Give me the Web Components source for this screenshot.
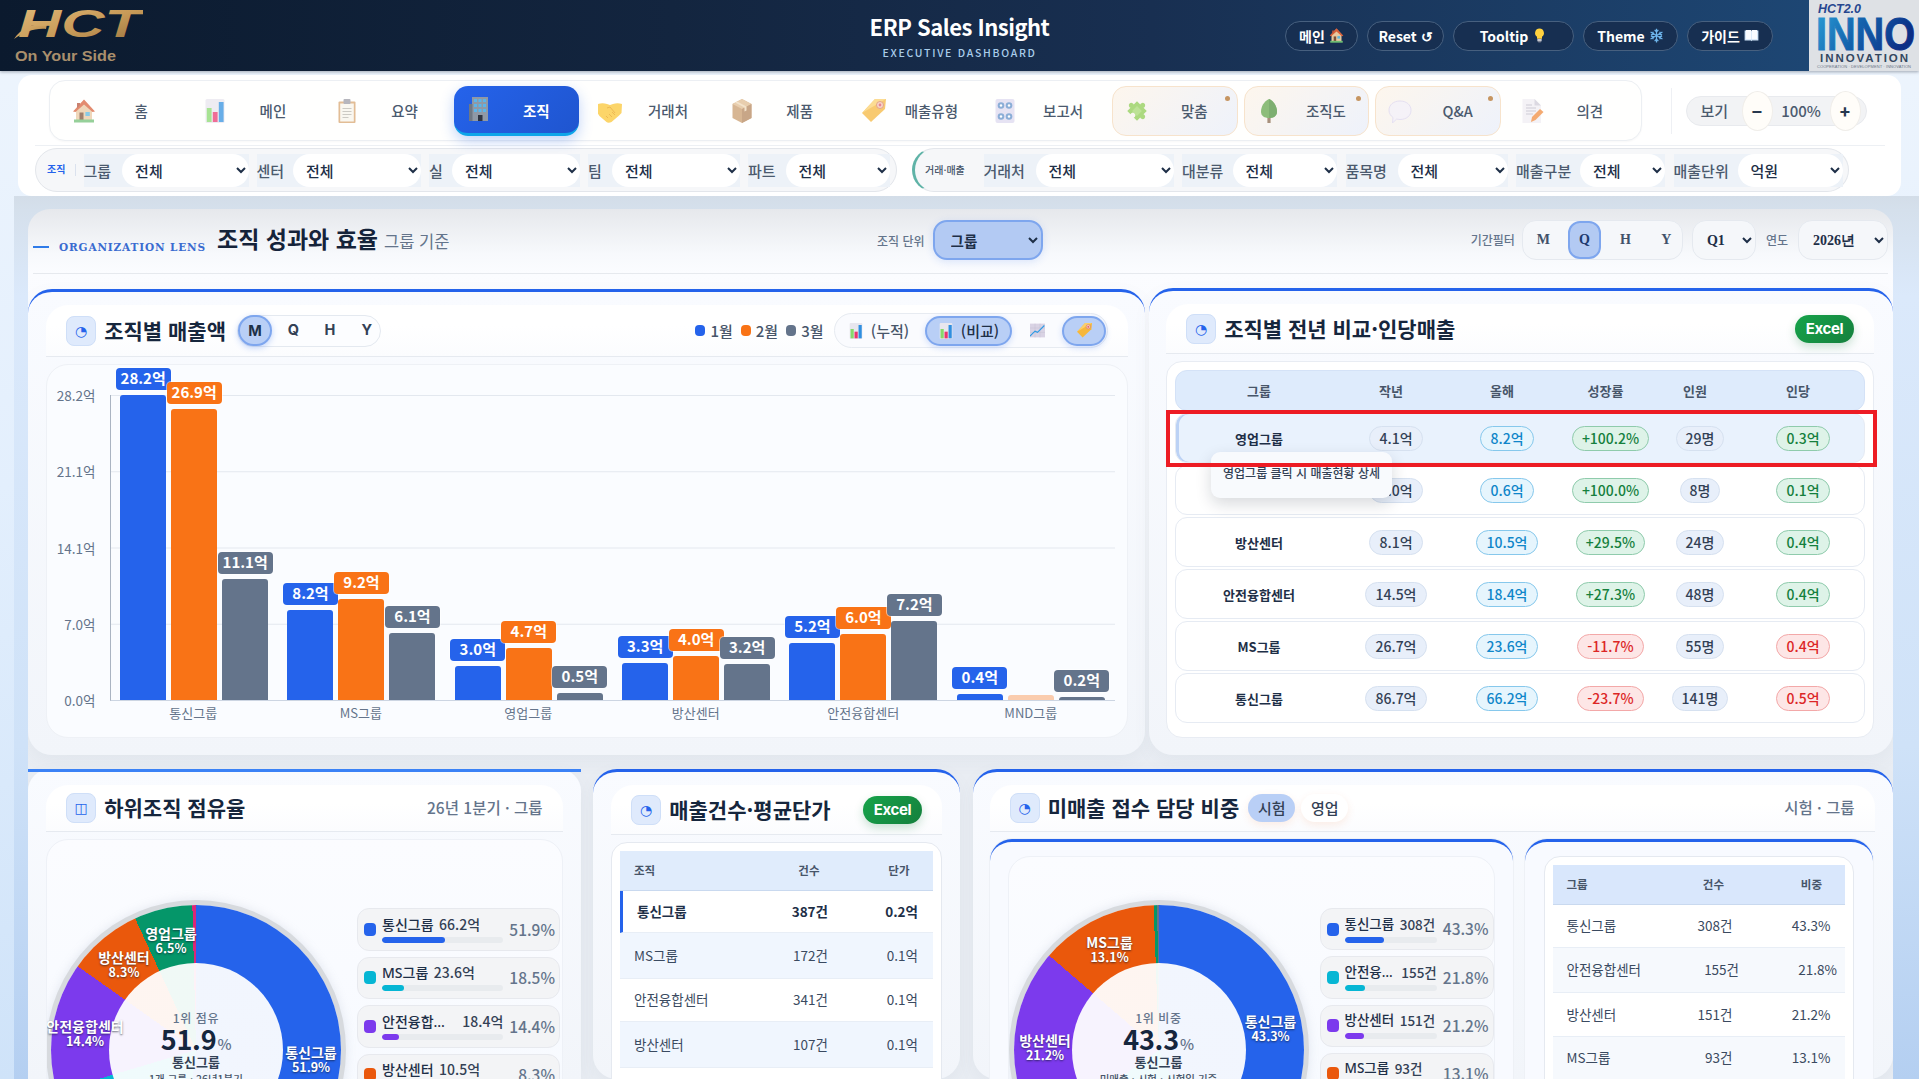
<!DOCTYPE html>
<html lang="ko"><head><meta charset="utf-8"><title>ERP Sales Insight</title>
<style>
html,body{margin:0;padding:0;height:1079px;overflow:hidden}
body{width:1919px;font-family:"Noto Sans CJK KR","Noto Sans",sans-serif;color:#1e293b;
background:linear-gradient(180deg,#eef5fd 0,#e3effd 45%,#cfe3f9 100%)}
</style></head><body>
<app-header></app-header>
<app-nav></app-nav>
<app-main>
  <section-head></section-head>
  <card-row style="--cols:1117.5px 744px;--gap:4px">
    <app-card heading="조직별 매출액" icon="◔" head="52" style="height:466px;--pl:18.5px;--pr:17px;--bodygap:7px">
      <chart-seg slot="lead"></chart-seg>
      <chart-tools slot="actions"></chart-tools>
      <bar-chart></bar-chart>
    </app-card>
    <app-card heading="조직별 전년 비교·인당매출" icon="◔" head="50" style="height:467px;margin-top:-1px;--pl:17px;--pr:19px;--bodygap:7px">
      <excel-btn slot="actions"></excel-btn>
      <cmp-table></cmp-table>
    </app-card>
  </card-row>
  <card-row style="--cols:552.5px 367px 920px;--gap:12.5px;margin-top:14px;padding-left:.5px">
    <app-card heading="하위조직 점유율" icon="◫" head="47" flat style="height:310px;--bodygap:7px">
      <span-note slot="actions" text="26년 1분기 · 그룹"></span-note>
      <donut-panel kind="share" style="--top:65px;--lead:4px;--lw:203px;--lgap:16px;--lf:14px;height:260px"></donut-panel>
    </app-card>
    <app-card heading="매출건수·평균단가" icon="◔" head="50" style="height:310px;--bodygap:7px">
      <excel-btn slot="actions"></excel-btn>
      <mini-table kind="count" style="--rc:90px;--pr2:15px;height:250px"></mini-table>
    </app-card>
    <app-card heading="미매출 접수 담당 비중" icon="◔" head="47" style="height:310px;--pl:17px;--pr:18px;--bodygap:7px">
      <pill-tabs slot="lead"></pill-tabs>
      <span-note slot="actions" text="시험 · 그룹"></span-note>
      <card-row style="--cols:523px 348px;--gap:12px">
        <sub-card style="--px:18px"><donut-panel kind="pending" style="--top:48px;--lead:5px;--lw:174px;--lgap:16px;--lf:13.5px;height:240px"></donut-panel></sub-card>
        <sub-card style="--px:19px"><mini-table kind="staff" style="--rc:98px;--pr2:14px;height:240px"></mini-table></sub-card>
      </card-row>
    </app-card>
  </card-row>
</app-main>
<script>
const def=(name,fn)=>customElements.define(name,class extends HTMLElement{
  connectedCallback(){ if(this.shadowRoot) return; const s=this.attachShadow({mode:'open'}); s.innerHTML=fn(this); }
});
/* ---------- emoji-like icons drawn as SVG ---------- */
const ICONS={
house:'<path d="M12 1 2 12h2v9h16v-9h2z" fill="#e9c9a0"/><path d="M12 .5 1 12.500l2.500.5L12 5.500l8.500 7.500 2.500-.5z" fill="#d9603a"/><path d="M5 4h3v2L5 9.500z" fill="#b5533a"/><rect x="7.500" y="13.500" width="4" height="7.500" fill="#7c4f35"/><rect x="13.400" y="13" width="4.400" height="4" fill="#5cb6dd"/><rect x="2" y="20.500" width="20" height="3" fill="#6fbf73"/>',
chart:'<rect x="2.500" y="0" width="19" height="24" rx="1.500" fill="#e8e6ee"/><rect x="3.800" y="9" width="4.800" height="14" fill="#86d96b"/><rect x="9.800" y="13" width="4.800" height="10" fill="#e9356f"/><rect x="15.800" y="3" width="4.800" height="20" fill="#2f8fe0"/>',
clip:'<rect x="3.500" y="2.500" width="17" height="21.500" rx="1" fill="#d8a46e"/><rect x="5.200" y="4.500" width="13.600" height="18" fill="#f8f4ec"/><rect x="8.500" y="0" width="7" height="5" rx="1" fill="#9a9aa5"/><path d="M7.500 9.500h9M7.500 12.500h9M7.500 15.500h9M7.500 18.500h6" stroke="#b9b6ae" stroke-width="1"/>',
bldg:'<rect x="5" y="0" width="16" height="24" fill="#8f99a6"/><rect x="2" y="7" width="3.500" height="17" fill="#6f7884"/><g fill="#5bb5ea"><rect x="7" y="2" width="3" height="3"/><rect x="11.500" y="2" width="3" height="3"/><rect x="16" y="2" width="3" height="3"/><rect x="7" y="7" width="3" height="3"/><rect x="11.500" y="7" width="3" height="3"/><rect x="16" y="7" width="3" height="3"/><rect x="7" y="12" width="3" height="3"/><rect x="11.500" y="12" width="3" height="3"/><rect x="16" y="12" width="3" height="3"/></g><rect x="11" y="18" width="4.500" height="6" fill="#2f3542"/>',
hand:'<path d="M0 5c3-1 6-1 9 0l3 1 3-1c3-1 6-1 9 0l-.5 9-3 3-7 6c-2 1-4 1-5 0l-7-6-2-3z" fill="#fbc531"/><path d="M9 9l3-1 5 6M8 17l2 2M11 15l3 3M14 13l3 3" stroke="#e79f13" stroke-width="1" fill="none"/>',
box:'<path d="M12 0 2.500 5v14l9.500 5 9.500-5V5z" fill="#c99b6b"/><path d="M12 0 2.500 5l9.500 5 9.500-5z" fill="#e0bc90"/><path d="M12 10v14l9.500-5V5z" fill="#b4845a"/><path d="M7 2.500l9.500 5v4l-2 1v-4L5 3.500z" fill="#efd9b8"/>',
tag:'<path d="M24 0 13 0 0 14l9 9 14-13z" fill="#f6b73c"/><path d="M24 0 13 0 0 14z" fill="#fbcf6a"/><circle cx="18" cy="6" r="3.500" fill="#f4c9b6" stroke="#d9805f"/><circle cx="18" cy="6" r="1.400" fill="#e2556a"/>',
knob:'<rect x="2.500" y="0" width="19" height="24" rx="2" fill="#ddd9ef"/><g fill="#5f8fc9"><circle cx="8" cy="6.500" r="3.300"/><circle cx="16" cy="6.500" r="3.300"/><circle cx="8" cy="17.500" r="3.300"/><circle cx="16" cy="17.500" r="3.300"/></g><g fill="#fff"><circle cx="8" cy="6.500" r="1.200"/><circle cx="16" cy="6.500" r="1.200"/><circle cx="8" cy="17.500" r="1.200"/><circle cx="16" cy="17.500" r="1.200"/></g>',
puzzle:'<g transform="rotate(45 12 12) translate(-1.800 -1.800) scale(1.150)"><path d="M6 6h4a2.200 2.200 0 1 1 4 0h4v4a2.200 2.200 0 1 1 0 4v4h-4a2.200 2.200 0 1 0-4 0H6v-4a2.200 2.200 0 1 1 0-4z" fill="#8fcf55"/><path d="M9 9h6v6H9z" fill="#a7dc74"/></g>',
tree:'<rect x="10.400" y="15" width="3.200" height="9" fill="#8a6a4f"/><path d="M12 0C7 2 4 8 4 12.500c0 4.500 3.500 6.500 8 6.500s8-2 8-6.500C20 8 17 2 12 0z" fill="#64a84e"/><path d="M12 0c5 2 8 8 8 12.500 0 4.500-3.500 6.500-8 6.500z" fill="#4f9540"/>',
bubble:'<path d="M12 2c6.400 0 11 3.800 11 9.300s-4.600 9.200-11 9.200c-1.200 0-2.300-.2-3.300-.5L4.500 24l.5-5.500C2.700 16.800 1 14.300 1 11.300 1 5.800 5.600 2 12 2z" fill="#f4f1fb" stroke="#ded8f2"/>',
memo:'<path d="M2.500 0h12l6.500 6.500V24h-18.500z" fill="#f0eef4"/><path d="M14.500 0l6.500 6.500h-6.500z" fill="#cfcbd8"/><path d="M6 6h6M6 9h10M6 12h10M6 15h7" stroke="#bcb8c6"/><path d="M11 23l1-5 8-8 3.500 3-8 8z" fill="#f08a3c"/>',
line:'<rect x="0" y="1" width="24" height="22" fill="#d9d3e4"/><path d="M0 8h24M0 15h24M8 1v22M16 1v22" stroke="#c4bcd2" stroke-width=".7"/><path d="M0 21l8-8 4 2 11-11" stroke="#2d9be6" stroke-width="1.800" fill="none"/>',
bulb:'<path d="M12 1a7 7 0 0 0-4 12.800V17h8v-3.200A7 7 0 0 0 12 1z" fill="#ffd23f"/><rect x="8.500" y="17.500" width="7" height="4" rx="1" fill="#c7c7cf"/><rect x="10" y="21.500" width="4" height="1.500" fill="#8b8b95"/>',
snow:'<g stroke="#6fb7ee" stroke-width="2" fill="none"><path d="M12 1v22M2.500 6.500l19 11M21.500 6.500l-19 11"/><path d="M9 3l3 3 3-3M9 21l3-3 3 3M3 11l4-1-1-4M21 11l-4-1 1-4M3 13l4 1-1 4M21 13l-4 1 1 4"/></g>',
book:'<path d="M1 4h10l1 1 1-1h10v16H13l-1 1-1-1H1z" fill="#cfe3f7"/><path d="M3 3h8.500v15H3zM12.500 3H21v15h-8.500z" fill="#fafcff"/>',
};
const ico=(n,s=24)=>`<svg viewBox="0 0 24 24" width="${s}" height="${s}" aria-hidden="true" style="flex:none;display:block">${ICONS[n]}</svg>`;
const FONT='"Noto Sans CJK KR","Noto Sans",sans-serif';
const selectCSS=`select{font:500 15px ${FONT};color:#1e2f47;border:0;background:#fff;border-radius:17px;height:33px;padding:0 0 0 9px;margin:0;outline:0;box-sizing:border-box}`;

/* ---------- header ---------- */
def('app-header',()=>`<style>
:host{display:grid;grid-template-columns:1fr auto 1fr;height:71px;background:linear-gradient(90deg,#0b1a2e 0,#13253f 35%,#182f51 60%,#1e4a79 100%);box-shadow:0 1px 3px rgba(15,23,42,.35);position:relative}
.logo{padding:0 0 0 13px}.logo svg{display:block}
.mid{text-align:center;padding-top:10px;color:#fff}
.t{font:700 22px/33px ${FONT};letter-spacing:-.5px;white-space:nowrap}
.s{font:500 10.500px/16px ${FONT};letter-spacing:1.700px;color:#a9cdea;margin-top:2px;white-space:nowrap}
.r{display:flex;justify-content:flex-end;align-items:stretch}
.btns{display:flex;gap:9px;align-items:center;margin-right:36px}
.b{display:flex;align-items:center;justify-content:center;gap:4px;box-sizing:border-box;height:30px;border:1px solid #47607f;border-radius:15px;background:#172f51;color:#fff;font:700 14px/1 ${FONT};white-space:nowrap}
</style>
<div class="logo"><svg width="130" height="66" viewBox="0 -8 130 66"><defs><linearGradient id="g" x1="0" x2="1" y1="0" y2="1"><stop offset="0" stop-color="#e2bb79"/><stop offset=".55" stop-color="#c79a58"/><stop offset="1" stop-color="#96703c"/></linearGradient></defs>
<path d="M1 31C8 20 20 15 34 16l-1 5C22 20 11 24 1 31z" fill="url(#g)"/>
<text x="5" y="29" font-family="Liberation Sans" font-weight="700" font-style="italic" font-size="38" fill="url(#g)" textLength="123" lengthAdjust="spacingAndGlyphs">HCT</text>
<text x="2" y="53" font-family="Liberation Sans" font-weight="700" font-size="15.500" fill="#a98f6c" textLength="101" lengthAdjust="spacingAndGlyphs">On Your Side</text></svg></div>
<div class="mid"><div class="t">ERP Sales Insight</div><div class="s">EXECUTIVE DASHBOARD</div></div>
<div class="r"><div class="btns">
<span class="b" style="width:73px">메인 ${ico('house',15)}</span><span class="b" style="width:77px">Reset ↺</span><span class="b" style="width:121px">Tooltip ${ico('bulb',15)}</span><span class="b" style="width:95px">Theme ${ico('snow',15)}</span><span class="b" style="width:86px">가이드 ${ico('book',15)}</span></div>
<svg width="110" height="71" viewBox="0 0 110 71" style="flex:none;display:block"><defs><linearGradient id="i" x1="0" x2="1" y1="0" y2=".3"><stop offset="0" stop-color="#2aa0d8"/><stop offset=".5" stop-color="#1463ad"/><stop offset="1" stop-color="#0c2f86"/></linearGradient></defs>
<rect width="110" height="71" fill="#dee1e5"/>
<text x="9" y="13" font-family="Liberation Sans" font-weight="700" font-style="italic" font-size="12" fill="#27468f" textLength="43" lengthAdjust="spacingAndGlyphs">HCT2.0</text>
<text x="7" y="50" font-family="Liberation Sans" font-weight="700" font-size="47" fill="url(#i)" stroke="url(#i)" stroke-width="1" textLength="99" lengthAdjust="spacingAndGlyphs">INNO</text>
<text x="11" y="62" font-family="Liberation Sans" font-weight="700" font-size="11.500" fill="#33475f" textLength="88" lengthAdjust="spacing">INNOVATION</text>
<text x="8" y="68" font-family="Liberation Sans" font-size="4" fill="#6a7686" textLength="94" lengthAdjust="spacing">COOPERATION · DEVELOPMENT · INNOVATION</text></svg></div>`);

/* ---------- nav + filters ---------- */
const TABS=[['house','홈'],['chart','메인'],['clip','요약'],['bldg','조직',1],['hand','거래처'],['box','제품'],['tag','매출유형'],['knob','보고서'],['puzzle','맞춤',2],['tree','조직도',2],['bubble','Q&A',2],['memo','의견']];
def('app-nav',()=>`<style>
:host{display:block;box-sizing:border-box;width:1883px;height:121px;margin:4px 0 0 18px;background:#fff;border-radius:14px;padding-top:5px;position:relative}
.top{display:flex;align-items:center;margin-left:31px;height:61px}
.tabs{box-sizing:border-box;width:1593px;height:61px;border:1px solid #eceff3;border-radius:16px;display:flex;gap:6.200px;align-items:center;padding:0 8.500px;background:#fffffe;box-shadow:0 1px 2px rgba(15,23,42,.03)}
.tab{box-sizing:border-box;flex:none;width:125.500px;height:50px;border-radius:14px;display:flex;align-items:center;padding-left:13px;position:relative;font:500 14.500px/1 ${FONT};color:#4b5a6e}
.tab svg{opacity:.72}.tab span{flex:1;text-align:center;padding-left:3px;margin-top:2px}
.tab.on{background:linear-gradient(135deg,#2563eb,#1f55cf);color:#fff;font-weight:700;border-bottom:3px solid #0ea5e9;box-shadow:0 5px 14px rgba(37,99,235,.28)}
.tab.on svg{opacity:1}.tab.on span{margin-top:4px}
.tab.x{border:1px solid #f7e3cc;background:linear-gradient(135deg,#fdf6ed,#eef2fb);padding-left:12px}
.tab.x i{position:absolute;right:7px;top:9px;width:5px;height:5px;border-radius:50%;background:#c69561}
.sep{width:1px;height:46px;background:#eef0f4;margin-left:29px}
.zoom{box-sizing:border-box;margin-left:13.500px;width:181px;height:30px;border-radius:15px;background:#f2f3f5;border:1px solid #e8eaee;display:flex;align-items:center;font:500 15px/1 ${FONT};color:#4b5a6e;padding-left:14px}
.o{box-sizing:border-box;flex:none;width:31px;height:40px;border-radius:50%;background:#fffdf9;border:1px solid #f0eeea;display:flex;align-items:center;justify-content:center;font:800 17px/1 ${FONT};color:#27384f}
.p{flex:none;text-align:center}
hr{border:0;height:1px;background:#edf0f4;margin:4px 16px 2px 17px}
</style>
<div class="top"><div class="tabs">${TABS.map(([i,t,k])=>`<div class="tab ${k==1?'on':k==2?'x':''}">${ico(i,24)}<span>${t}</span>${k==2?'<i></i>':''}</div>`).join('')}</div>
<div class="sep"></div><div class="zoom"><span style="width:41px;flex:none">보기</span><div class="o">−</div><span class="p" style="width:57px">100%</span><div class="o">+</div></div></div>
<hr>
<filter-row></filter-row>`);
const fOrg=[['그룹',126.400],['센터',128],['실',128],['팀',128],['파트',104.400]];
const fSale=[['거래처',138],['대분류',104.500],['품목명',110],['매출구분',85],['매출단위',105,'억원']];
const fieldW={'그룹':165,'센터':164.400,'실':151,'팀':152,'파트':142,'거래처':190,'대분류':155,'품목명':162,'매출구분':149,'매출단위':169};
def('filter-row',()=>{
 const field=([l,w,v])=>`<label class="f" style="width:${fieldW[l]}px"><span>${l}</span><select style="width:${w}px"><option>${v||'전체'}</option></select></label>`;
 return `<style>
:host{display:flex;margin-left:17px}
.g{box-sizing:border-box;height:44px;border:1px solid #e3e6eb;border-radius:22px;background:#f6f7f9;display:flex;align-items:center}
.a{width:862px;padding-left:11px;gap:8px}
.b{width:937px;margin-left:15px;border-left:3px solid #5fb3a7;padding-left:10px;gap:8.500px;border-radius:24px}
.c{font:700 10px/1 ${FONT};color:#2563eb;width:28px;flex:none;margin-right:-.5px;border-right:1px solid #dbe2ee;height:12px;white-space:nowrap}
.d{font:500 10px/1 ${FONT};color:#475569;flex:none;width:50px;white-space:nowrap}
.f{box-sizing:border-box;flex:none;display:flex;align-items:center;justify-content:space-between;height:33px;background:#edf2f8;font:500 15px/1 ${FONT};color:#4b5a6e;white-space:nowrap}
${selectCSS}
</style>
<div class="g a"><span class="c">조직</span>${fOrg.map(field).join('')}</div>
<div class="g b"><span class="d">거래·매출</span>${fSale.map(field).join('')}</div>`});

/* ---------- section + layout ---------- */
def('app-main',()=>`<style>
:host{display:block;box-sizing:border-box;height:883px;margin:0 0 0 14px;padding:13px 0 0 13.500px;
background:linear-gradient(180deg,#d3dde8 0,#d5e0ec 14px,#dbe9fb 100px,#cfe2f8 550px,#b4cff1 883px)}
.in{box-sizing:border-box;width:1865.500px;height:880px;border-radius:22px 22px 0 0;overflow:hidden;
background:linear-gradient(180deg,#e6e8ec 0,#f7f9fc 45px,#fbfcff 64px,#f4f6fa 300px,#e9edf3 560px)}
</style><div class="in"><slot></slot></div>`);
def('card-row',()=>`<style>:host{display:grid;grid-template-columns:var(--cols);gap:var(--gap);align-items:start}</style><slot></slot>`);
def('section-head',()=>`<style>
:host{display:flex;align-items:center;box-sizing:border-box;height:65px;margin:0 5px 15px 5.500px;border-bottom:1px solid #e6e9ee;white-space:nowrap}
.d{width:16px;height:2.500px;background:#2f7be8;margin-top:12px}
.e{font:700 10.500px/1 "DejaVu Serif","Liberation Serif",serif;letter-spacing:.85px;color:#3a6bd0;margin:12px 0 0 10px;width:158px;flex:none}
.t{font:700 23px/1 ${FONT};color:#15233a;margin-top:-5px}
.s{font:400 16.500px/1 ${FONT};color:#64748b;margin-left:6px;margin-top:0;flex:none;width:65px}
.u{font:500 12px/1 ${FONT};color:#64748b;margin-left:428px}
.sel{box-sizing:border-box;width:110px;height:40px;border-radius:14px;border:2px solid #7ea6ee;background:#b3caf3;font:700 14.500px/1 ${FONT};color:#1e2f47;margin-left:8px;padding-left:12px;outline:0;box-shadow:0 2px 8px rgba(37,99,235,.14);margin-top:-2px}
.rt{margin-left:auto;display:flex;align-items:center;margin-top:-2px}
.l{font:500 12px/1 ${FONT};color:#64748b}
.seg{box-sizing:border-box;display:flex;width:161px;height:40px;margin-left:7px;border:1px solid #e5e9ef;border-radius:14px;background:#f5f7fa;align-items:center;font:700 14px/1 "Liberation Serif",serif;color:#41526a}
.seg b{flex:none;width:41px;text-align:center;line-height:38px;font-weight:700}
.seg b.on{width:33px;margin:0 4px;background:#b3caf3;border:2px solid #7ea6ee;border-radius:12px;box-sizing:border-box;height:38px;line-height:34px;color:#1e3a6e}
.p{box-sizing:border-box;height:40px;border-radius:14px;border:1px solid #e5e9ef;background:#f5f7fa;font:700 14px/1 "Liberation Serif",serif;color:#1e2f47;padding-left:10px;outline:0}
</style>
<span class="d"></span><span class="e">ORGANIZATION LENS</span><span class="t">조직 성과와 효율</span><span class="s">그룹 기준</span>
<span class="u">조직 단위</span><select class="sel"><option>그룹</option></select>
<div class="rt"><span class="l">기간필터</span><div class="seg"><b>M</b><b class="on">Q</b><b>H</b><b>Y</b></div>
<select class="p" style="width:64px;margin-left:9px"><option>Q1</option></select><span class="l" style="margin-left:10px">연도</span><select class="p" style="width:90px;margin-left:10px"><option>2026년</option></select></div>`);

/* ---------- cards ---------- */
def('app-card',h=>`<style>
:host{display:block;box-sizing:border-box;position:relative;border-radius:24px;border-top:3px solid #2563eb;background:linear-gradient(180deg,#f9fbff 0,#f2f5fa 100%);padding:13px var(--pr,18px) 0 var(--pl,18px);box-shadow:0 6px 18px rgba(100,116,139,.06)}
:host([flat]){border-top:0;padding-top:16px;border-radius:22px 22px 0 0}
:host([flat])::before{content:"";position:absolute;left:0;right:0;top:0;height:3px;background:#3b82f6}
.h{box-sizing:border-box;display:flex;align-items:center;height:${h.getAttribute('head')}px;padding:0 20px 0 20px;border-bottom:1px solid #e6eaf0;border-radius:22px 22px 0 0;background:linear-gradient(180deg,#fff 40%,#fbfcfe 100%);white-space:nowrap}
.i{box-sizing:border-box;width:30px;height:30px;flex:none;border-radius:8px;background:#dfeafc;border:1px solid #cfdff8;color:#2563eb;display:flex;align-items:center;justify-content:center;font:14px/1 "DejaVu Sans",sans-serif}
.t{font:700 21px/1 ${FONT};color:#16263d;margin-left:8.200px;margin-top:-1px}
.sp{flex:1}
.b{margin-top:var(--bodygap,7px)}
</style>
<div class="h"><span class="i">${h.getAttribute('icon')}</span><span class="t">${h.getAttribute('heading')}</span><slot name="lead"></slot><span class="sp"></span><slot name="actions"></slot></div>
<div class="b"><slot></slot></div>`);
def('sub-card',()=>`<style>:host{display:block;box-sizing:border-box;border-top:3px solid #2563eb;border-radius:22px 22px 0 0;background:#f8faff;padding:14px var(--px,18px) 0;height:262px;box-shadow:0 0 0 1px #eef1f6}</style><slot></slot>`);
def('span-note',h=>`<style>:host{display:block;font:500 15.500px/1 ${FONT};color:#64748b}</style>${h.getAttribute('text')}`);
def('excel-btn',()=>`<style>:host{display:block;box-sizing:border-box;width:59px;height:28px;border-radius:14px;background:linear-gradient(135deg,#16a34a,#15803d);color:#fff;font:700 15px/28px Inter,sans-serif;text-align:center;letter-spacing:-.4px;box-shadow:0 4px 10px rgba(21,128,61,.22);}</style>Excel`);
def('pill-tabs',()=>`<style>:host{display:flex;gap:6px;margin-left:9px;font:500 15px/28px ${FONT};color:#334155}
b{font-weight:500;width:47px;height:28px;text-align:center;border-radius:14px;box-shadow:0 3px 8px rgba(234,88,12,.1)}
.on{background:#b9cff6}.off{background:#fff}</style><b class="on">시험</b><b class="off">영업</b>`);
def('chart-seg',()=>`<style>:host{display:flex;box-sizing:border-box;margin-left:11px;height:32px;width:144px;border:1px solid #e4e9f0;border-radius:16px;background:#fcfdff;align-items:center;font:700 14.500px/1 Inter,sans-serif;color:#334155}
b{width:36.700px;text-align:center;font-weight:700;flex:none}
.on{box-sizing:border-box;width:34px;height:31px;line-height:27px;border-radius:16px;background:#b9cff6;border:2px solid #7ea6ee;box-shadow:0 2px 6px rgba(37,99,235,.28);color:#1e2f47;margin-right:3px}
</style><b class="on">M</b><b>Q</b><b>H</b><b>Y</b>`);
def('chart-tools',()=>`<style>:host{display:flex;align-items:center;font:500 15px/1 ${FONT};color:#475569;white-space:nowrap;margin-right:0}
i{display:block;width:10px;height:11px;border-radius:4px;margin-right:5px}
.l{margin-right:8px}
.g{box-sizing:border-box;display:flex;gap:6.500px;width:274.500px;height:35px;margin-left:2px;padding-left:4px;border:1px solid #e7ebf1;border-radius:18px;background:#fafbfe;align-items:center}
.k{box-sizing:border-box;display:flex;align-items:center;justify-content:center;gap:7px;height:30px;border-radius:15px;flex:none}
.on{background:#b9cff6;border:2px solid #7ea6ee;box-shadow:0 2px 6px rgba(37,99,235,.2);color:#1e2f47}
</style><i style="background:#2563eb"></i><span class="l">1월</span><i style="background:#f97316"></i><span class="l">2월</span><i style="background:#64748b"></i><span class="l">3월</span>
<div class="g"><span class="k" style="width:80px">${ico('chart',16)}(누적)</span><span class="k on" style="width:87px">${ico('chart',16)}(비교)</span><span class="k" style="width:37px">${ico('line',15)}</span><span class="k on" style="width:44px">${ico('tag',15)}</span></div>`);

/* ---------- bar chart ---------- */
const BARS=[['통신그룹',28.2,26.9,11.1],['MS그룹',8.2,9.2,6.1],['영업그룹',3.0,4.7,0.5],['방산센터',3.3,4.0,3.2],['안전융합센터',5.2,6.0,7.2],['MND그룹',0.4,0,0.2]];
const BC=['#2563eb','#f97316','#64748b'];
def('bar-chart',()=>{
 const col=(v,i)=>{const h=v===0?5:v*10.82+(v<12?1.2:0);return `<div class="c">${v?`<span class="v" style="background:${BC[i]}">${v.toFixed(1)}억</span>`:''}<div class="b" style="height:${h}px;background:${BC[i]};${v?'':'opacity:.35'}"></div></div>`};
 return `<style>
:host{display:flex;box-sizing:border-box;height:374px;border:1px solid #eef1f6;border-radius:22px;background:#fafcff;padding:30px 12px 0 0}
.y{width:48.500px;flex:none;height:323px;margin-top:-9px;display:flex;flex-direction:column;justify-content:space-between;text-align:right;font:400 13.500px/18px ${FONT};color:#64748b}
.m{margin-left:14px;width:1005px}
.p{box-sizing:border-box;height:306px;display:flex;border-left:1px solid #aab4c2;border-bottom:1px solid #ccd5e2;background:linear-gradient(#e3e8ef 1px,transparent 1px) 0 0/100% 76.250px}
.g{flex:1;display:flex;justify-content:center;align-items:flex-end;gap:5px}
.c{width:46px;display:flex;flex-direction:column;align-items:center}
.v{flex:none;box-sizing:border-box;width:55px;height:22px;margin-bottom:5px;border-radius:4px;color:#fff;font:700 15px/20px ${FONT};text-align:center;white-space:nowrap;box-shadow:0 0 0 1px rgba(255,255,255,.5)}
.b{width:46px;border-radius:3px 3px 0 0}
.x{display:flex;margin-top:2px}.x span{flex:1;text-align:center;font:400 13px/20px ${FONT};color:#64748b}
</style>
<div class="y"><span>28.2억</span><span>21.1억</span><span>14.1억</span><span>7.0억</span><span>0.0억</span></div>
<div class="m"><div class="p">${BARS.map(([n,...v])=>`<div class="g">${v.map(col).join('')}</div>`).join('')}</div>
<div class="x">${BARS.map(b=>`<span>${b[0]}</span>`).join('')}</div></div>`});

/* ---------- comparison table ---------- */
const CMP=[['영업그룹','4.1억','8.2억','+100.2%','29명','0.3억','g'],['MND그룹','0.0억','0.6억','+100.0%','8명','0.1억','g'],['방산센터','8.1억','10.5억','+29.5%','24명','0.4억','g'],['안전융합센터','14.5억','18.4억','+27.3%','48명','0.4억','g'],['MS그룹','26.7억','23.6억','-11.7%','55명','0.4억','r'],['통신그룹','86.7억','66.2억','-23.7%','141명','0.5억','r']];
def('cmp-table',()=>`<style>
:host{display:block;box-sizing:border-box;position:relative;height:377px;background:#fff;border:1px solid #e8ecf3;border-radius:16px;padding:8px}
.r{display:grid;grid-template-columns:166px 98px 124px 83px 96px 110px;align-items:center;justify-items:center;box-sizing:border-box}
.hd{height:41px;background:#deebfc;border:1px solid #d4e2f7;border-radius:12px;font:600 13px/1 ${FONT};color:#475569;margin-bottom:2px;padding-bottom:1px}
.row{height:50px;margin-bottom:2px;border:1px solid #e6ebf3;border-radius:12px;background:#fff;font:700 13px/1 ${FONT};color:#1e2f47}
.row.on{background:#e9f2fd;box-shadow:inset 3px 0 #bcd2f5}
.p{box-sizing:border-box;margin-left:10px;height:25px;line-height:22px;padding:0 9px;border:1px solid;border-radius:13px;font-weight:500;font-size:14px;white-space:nowrap}
.n{background:#e8effa;border-color:#d6e1f0;color:#334155}.bl{background:#e6f5fd;border-color:#86c8ec;color:#0f86c9}
.gr{background:#def3e8;border-color:#8fcbac;color:#15803d}.rd{background:#fde6e6;border-color:#f3a8a8;color:#dc2626}
.tip{position:absolute;left:44px;top:90px;width:181px;height:45.500px;background:#f8fafd;border-radius:9px;box-shadow:0 6px 16px rgba(15,23,42,.16);font:500 12px/42px ${FONT};color:#334155;text-align:center;white-space:nowrap}
.mark{position:absolute;left:-1px;top:48px;width:711px;height:57px;box-sizing:border-box;border:4px solid #ed1c24}
</style>
<div class="r hd"><span>그룹</span><span>작년</span><span>올해</span><span>성장률</span><span>인원</span><span>인당</span></div>
${CMP.map((d,i)=>`<div class="r row ${i?'':'on'}"><span>${d[0]}</span><span class="p n">${d[1]}</span><span class="p bl">${d[2]}</span><span class="p ${d[6]=='g'?'gr':'rd'}">${d[3]}</span><span class="p n">${d[4]}</span><span class="p ${d[6]=='g'?'gr':'rd'}">${d[5]}</span></div>`).join('')}
<div class="tip">영업그룹 클릭 시 매출현황 상세</div><div class="mark"></div>`);

/* ---------- donut ---------- */
const C6={blue:'#2563eb',cyan:'#06b6d4',pur:'#7c3aed',org:'#ea580c',grn:'#059669',pink:'#db2777',gray:'#64748b'};
const DON={
share:{seg:[['blue',51.9],['cyan',18.5],['pur',14.4],['org',8.3],['grn',6.5],['pink',.4]],
 lab:[['영업그룹','6.5%',171,933],['방산센터','8.3%',124,957],['안전융합센터','14.4%',85,1026],['통신그룹','51.9%',311,1052]],ox:51,
 cap:'1위 점유',big:'51.9',nm:'통신그룹',sub:'1개 그룹 · 26년1분기',
 leg:[['blue','통신그룹','66.2억','51.9%'],['cyan','MS그룹','23.6억','18.5%'],['pur','안전융합센터','18.4억','14.4%'],['org','방산센터','10.5억','8.3%']]},
pending:{seg:[['blue',43.3],['cyan',21.8],['pur',21.2],['org',13.1],['grn',.4],['gray',.2]],
 lab:[['통신그룹','43.3%',1270.5,1021],['방산센터','21.2%',1045,1040],['MS그룹','13.1%',1109.6,942]],ox:1013.500,
 cap:'1위 비중',big:'43.3',nm:'통신그룹',sub:'미매출 · 시험 · 시험일 기준',
 leg:[['blue','통신그룹','308건','43.3%'],['cyan','안전융합센터','155건','21.8%'],['pur','방산센터','151건','21.2%'],['org','MS그룹','93건','13.1%']]}};
def('donut-panel',h=>{const d=DON[h.getAttribute('kind')];let a=0;
 const stops=d.seg.map(([c,v])=>{const s=`${C6[c]} ${a}% ${a+v}%`;a+=v;return s}).join(',');
 return `<style>
:host{display:flex;box-sizing:border-box;background:linear-gradient(180deg,#fbfcff,#f7faff);border:1px solid #eef1f7;border-radius:22px 22px 0 0;padding:var(--top) 0 0 var(--lead);overflow:hidden}
.d{position:relative;flex:none;width:290px;height:290px;border-radius:50%;background:conic-gradient(${stops});box-shadow:0 0 0 5px #d7dade,0 0 10px 6px rgba(148,163,184,.18)}
.hole{position:absolute;inset:58px;border-radius:50%;background:linear-gradient(rgba(255,255,255,.94),rgba(255,255,255,.94)),conic-gradient(${stops});text-align:center;color:#16263d}
.lab{position:absolute;transform:translate(-50%,-50%);color:#fff;text-align:center;white-space:nowrap;font:700 14px/13px ${FONT};text-shadow:0 1px 2px rgba(15,23,42,.65)}
.lab small{display:block;font:700 12.500px/13px ${FONT};margin-top:1px}
.cap{font:500 12px/1 ${FONT};color:#64748b;letter-spacing:.6px;margin-top:49px}
.big{font:700 27px/1 ${FONT};margin-top:1px;letter-spacing:-.2px}.big i{font:500 15px/1 ${FONT};color:#64748b;margin-left:1px}
.nm{font:700 13px/1 ${FONT};color:#334155;margin-top:3px}
.sub{font:500 10.500px/1 ${FONT};color:#475569;margin-top:6px;white-space:nowrap}
.lg{flex:none;width:var(--lw);margin-left:var(--lgap);padding-top:3px;display:flex;flex-direction:column;gap:6px}
.it{box-sizing:border-box;height:42.500px;display:grid;grid-template-columns:12px minmax(0,1fr) auto;column-gap:6px;align-items:center;background:#f3f4f6;border:1px solid #e7e9ee;border-radius:12px;padding:0 4px 0 6px}
.sw{width:12px;height:13px;border-radius:4px}
.mid{min-width:0;margin-top:-1px}
.top{display:flex;gap:5.500px;font:500 var(--lf)/19px ${FONT};color:#1e2f47;white-space:nowrap}
.nmx{overflow:hidden;text-overflow:ellipsis;min-width:0;font-family:"Noto Sans","Noto Sans CJK KR",sans-serif}.top b{font-weight:500;flex:none;color:#334155}
.bar{height:6px;border-radius:3px;background:#e8ebee;margin-top:3px;overflow:hidden}.bar i{display:block;height:6px;border-radius:3px}
.pc{font:500 15.500px/1 ${FONT};color:#64748b}
</style>
<div class="d">
<div class="hole"><div class="cap">${d.cap}</div><div class="big">${d.big}<i>%</i></div><div class="nm">${d.nm}</div><div class="sub">${d.sub}</div></div>
${d.lab.map(([n,p,x,y])=>`<div class="lab" style="left:${x-d.ox}px;top:${y+7-905}px">${n}<small>${p}</small></div>`).join('')}
</div>
<div class="lg">${d.leg.map(([c,n,v,p])=>`<div class="it"><span class="sw" style="background:${C6[c]}"></span><div class="mid"><div class="top"><span class="nmx">${n}</span><b>${v}</b></div><div class="bar"><i style="width:${parseFloat(p)}%;background:${C6[c]}"></i></div></div><span class="pc">${p}</span></div>`).join('')}</div>`});

/* ---------- mini tables ---------- */
const MINI={
count:{head:['조직','건수','단가'],hb:'#e0ecfc',alt:'#f0f6fe',hs:[40,42,46,43,46,46],sel:0,rows:[['통신그룹','387건','0.2억'],['MS그룹','172건','0.1억'],['안전융합센터','341건','0.1억'],['방산센터','107건','0.1억']]},
staff:{head:['그룹','건수','비중'],hb:'#d9e7fc',alt:'#f6f9fd',hs:[40,43,45,44,43,45],sel:-1,rows:[['통신그룹','308건','43.3%'],['안전융합센터','155건','21.8%'],['방산센터','151건','21.2%'],['MS그룹','93건','13.1%']]}};
def('mini-table',h=>{const d=MINI[h.getAttribute('kind')];
 return `<style>
:host{display:block;box-sizing:border-box;background:#fff;border:1px solid #e5e9f0;border-radius:16px 16px 0 0;padding:8px 8px 0;overflow:hidden}
.r{display:grid;grid-template-columns:1fr var(--rc) var(--rc);align-items:center;padding:0 var(--pr2) 0 14px;box-sizing:border-box;border-bottom:1px solid #e8eef6;font:400 13.500px/1 ${FONT};color:#3a4a60;text-align:right;white-space:nowrap}
.r span:first-child{text-align:left}
.hd{background:${d.hb};border-bottom:1px solid #c9d9ef;font:700 11.500px/1 ${FONT};color:#475569}
.hd span:not(:first-child){padding-right:8.500px}
.alt{background:${d.alt}}
.sel{border-left:3px solid #2563eb;padding-left:14px;font-weight:700;color:#1e2f47;background:#fff}
</style><div class="r hd" style="height:${d.hs[0]}px">${d.head.map(t=>`<span>${t}</span>`).join('')}</div>
${d.rows.map((r,i)=>`<div class="r ${i==d.sel?'sel':i%2?'alt':''}" style="height:${d.hs[i+1]}px">${r.map(t=>`<span>${t}</span>`).join('')}</div>`).join('')}`});
</script>
</body></html>
